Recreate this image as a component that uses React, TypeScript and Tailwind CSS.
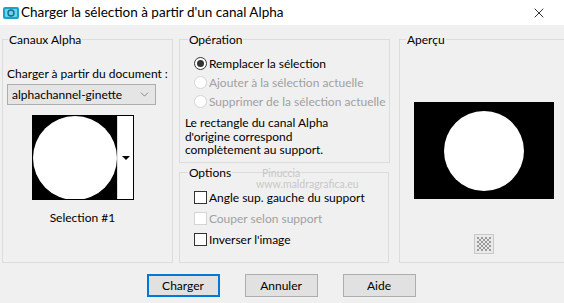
import { X, ChevronDown } from "lucide-react";

function Radio({ label, checked, disabled }: { label: string; checked?: boolean; disabled?: boolean }) {
  return (
    <div className="flex items-center h-[19px] whitespace-nowrap">
      <span
        className={
          "w-[13px] h-[13px] shrink-0 rounded-full border flex items-center justify-center bg-white " +
          (disabled ? "border-[#d4d4d4]" : "border-[#333333]")
        }
      >
        {checked && <span className="w-[7px] h-[7px] rounded-full bg-[#333333]" />}
      </span>
      <span className={"ml-[2px] " + (disabled ? "text-[#a0a0a0]" : "text-black")}>{label}</span>
    </div>
  );
}

function Check({ label, disabled }: { label: string; disabled?: boolean }) {
  return (
    <div className="flex items-center h-[21px] whitespace-nowrap">
      <span
        className={
          "w-[13px] h-[13px] shrink-0 border bg-white " + (disabled ? "border-[#d4d4d4]" : "border-[#333333]")
        }
      />
      <span className={"ml-[2px] " + (disabled ? "text-[#a0a0a0]" : "text-black")}>{label}</span>
    </div>
  );
}

function Btn({ label, primary }: { label: string; primary?: boolean }) {
  return (
    <button
      className={
        "w-[73px] h-[23px] bg-[#e1e1e1] text-black " +
        (primary ? "border-2 border-[#0078d7]" : "border border-[#adadad]")
      }
    >
      {label}
    </button>
  );
}

export default function App() {
  return (
    <div
      className="w-[564px] h-[303px] bg-[#f0f0f0] text-[12px] leading-[15px] text-black overflow-hidden flex flex-col"
      style={{ fontFamily: 'Lato, "Noto Sans", sans-serif' }}
    >
      {/* title bar */}
      <div className="h-[25px] bg-white flex items-center pl-[3px] pr-[17px] shrink-0">
        <svg width="16" height="14" viewBox="0 0 16 14">
          <rect x="0" y="1" width="16" height="12" rx="2" fill="#1aa3c9" />
          <rect x="2" y="3" width="12" height="8" rx="1" fill="#6fd3ee" />
          <circle cx="8" cy="7" r="3" fill="none" stroke="#0e6f8c" strokeWidth="1.4" />
        </svg>
        <span className="ml-[2px] text-[13.5px] whitespace-nowrap">Charger la sélection à partir d'un canal Alpha</span>
        <X size={16} strokeWidth={1.2} className="ml-auto" />
      </div>

      <div className="relative flex px-[2px] pt-[7px] h-[238px]">
        {/* Canaux Alpha */}
        <fieldset className="w-[170px] border border-[#dcdcdc] px-[4px] pb-0 m-0">
          <legend className="px-[1px] ml-[1px]">Canaux Alpha</legend>
          <div className="mt-[19px] whitespace-nowrap">Charger à partir du document :</div>
          <div className="mt-[3px] w-[149px] h-[21px] border border-[#adadad] bg-[#e5e5e5] flex items-center pl-[4px] pr-[4px]">
            <span>alphachannel-ginette</span>
            <ChevronDown size={13} strokeWidth={1.2} className="ml-auto text-[#555]" />
          </div>
          <div className="mt-[10px] ml-[25px] w-[102px] h-[85px] border border-black flex">
            <div className="w-[84px] h-full bg-black overflow-hidden flex items-center justify-center">
              <div className="w-[84px] h-[84px] shrink-0 rounded-full bg-white" />
            </div>
            <div className="flex-1 bg-white border-l border-[#dcdcdc] flex items-center justify-center">
              <span className="w-0 h-0 border-l-[4px] border-r-[4px] border-t-[4px] border-l-transparent border-r-transparent border-t-black" />
            </div>
          </div>
          <div className="mt-[10px] text-center pr-[10px]">Selection #1</div>
        </fieldset>

        {/* middle column */}
        <div className="ml-[6px] w-[210px] flex flex-col gap-[2px]">
          <fieldset className="h-[131px] border border-[#dcdcdc] pl-[14px] pr-[4px] m-0">
            <legend className="px-[1px] -ml-[6px]">Opération</legend>
            <div className="mt-[7px]">
              <Radio label="Remplacer la sélection" checked />
              <Radio label="Ajouter à la sélection actuelle" disabled />
              <Radio label="Supprimer de la sélection actuelle" disabled />
            </div>
            <div className="mt-[5px] -ml-[9px] leading-[13.5px] whitespace-nowrap">
              Le rectangle du canal Alpha
              <br />
              d'origine correspond
              <br />
              complètement au support.
            </div>
          </fieldset>
          <fieldset className="h-[98px] border border-[#dcdcdc] pl-[14px] pr-[4px] m-0">
            <legend className="px-[1px] -ml-[6px]">Options</legend>
            <div className="mt-[7px]">
              <Check label="Angle sup. gauche du support" />
              <Check label="Couper selon support" disabled />
              <Check label="Inverser l'image" />
            </div>
          </fieldset>
        </div>

        {/* Aperçu */}
        <fieldset className="ml-[10px] w-[164px] border border-[#dcdcdc] px-[14px] m-0 flex flex-col">
          <legend className="px-[1px] -ml-[8px]">Aperçu</legend>
          <div className="mt-[55px] w-[140px] h-[97px] bg-black flex items-center justify-center">
            <div className="w-[80px] h-[80px] rounded-full bg-white" />
          </div>
          <div className="mt-[35px] self-center w-[20px] h-[20px] border border-[#c8c8c8] bg-[#eaeaea] flex items-center justify-center">
            <svg width="14" height="14" viewBox="0 0 14 14">
              {[0, 1, 2, 3, 4, 5, 6].map((r) =>
                [0, 1, 2, 3, 4, 5, 6].map((c) =>
                  (r + c) % 2 === 0 ? (
                    <rect key={r + "-" + c} x={c * 2} y={r * 2} width="2" height="2" fill="#9a9a9a" />
                  ) : null
                )
              )}
            </svg>
          </div>
        </fieldset>

        {/* watermark */}
        <div className="absolute left-[256px] top-[143px] text-[10.5px] leading-[11px] text-[#c8c8c8] pointer-events-none">
          <div className="ml-[6px]">Pinuccia</div>
          <div>www.maldragrafica.eu</div>
        </div>
      </div>

      <div className="flex justify-center gap-[25px] mt-[11px] pr-[2px]">
        <Btn label="Charger" primary />
        <Btn label="Annuler" />
        <Btn label="Aide" />
      </div>
    </div>
  );
}
